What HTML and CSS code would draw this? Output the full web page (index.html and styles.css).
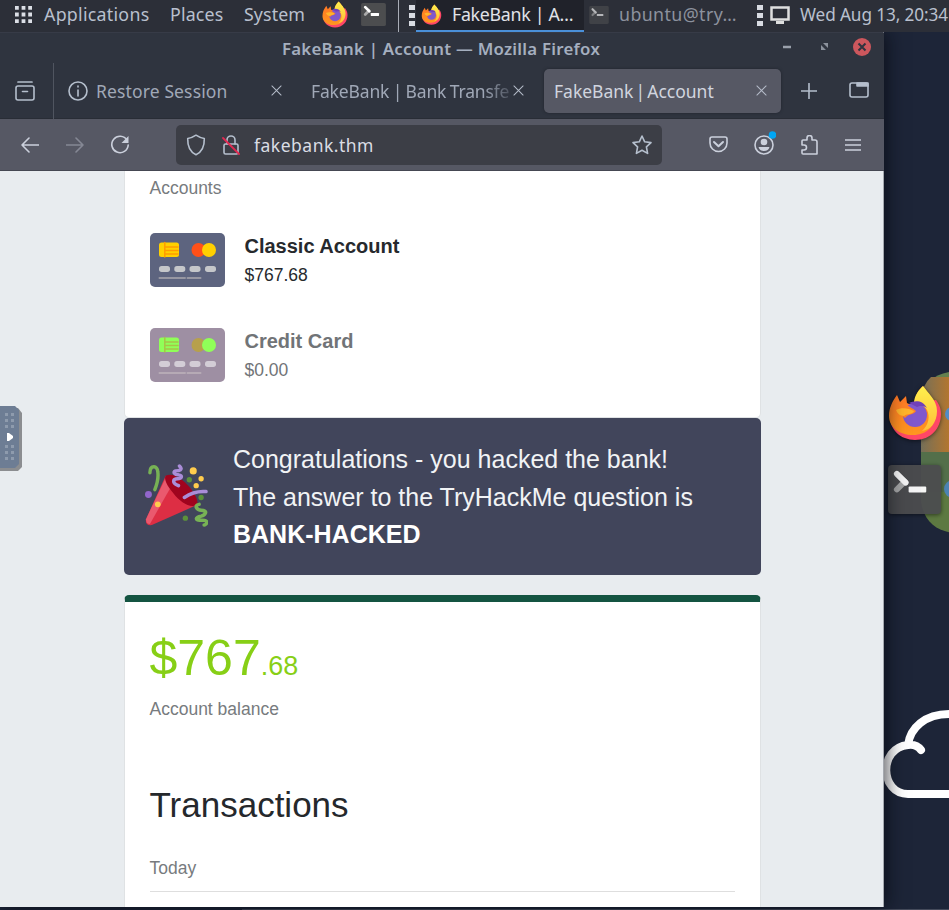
FILE: index.html
```html
<!DOCTYPE html>
<html lang="en">
<head>
<meta charset="utf-8">
<title>FakeBank | Account</title>
<link rel="stylesheet" href="styles.css">
</head>
<body>
<svg width="0" height="0" class="defs">
  <defs>
    <linearGradient id="fy" x1="0" y1="0" x2="0" y2="1"><stop offset="0" stop-color="#fff04d"/><stop offset="1" stop-color="#ffbd38"/></linearGradient>
    <linearGradient id="fo" x1="0" y1="0" x2="0" y2="1"><stop offset="0" stop-color="#ff7026"/><stop offset="1" stop-color="#ff971f"/></linearGradient>
    <symbol id="fox" viewBox="0 0 54 56">
      <path d="M4 22C-3 39 9 55 27 55c16 0 26-12 26-26 0-7-3-11-5-14z" fill="#ff4766"/>
      <path d="M1 31c0-8 3-14 8-21l3 7 6-6 1 7 8 4C25 14 30 5 35 1c4 6 13 14 13 25 0 15-9 24-23 24C11 50 1 42 1 31z" fill="url(#fo)"/>
      <path d="M26 19C26 10 31 5 35 1c4 6 14 14 14 25 0 12-7 19-15 20 7-6 8-15 5-21-3-5-7-6-13-6z" fill="url(#fy)"/>
      <circle cx="27" cy="30" r="12" fill="#8058cc"/>
      <path d="M16 17c4 5 9 6 12 9-2 4-7 2-11 7l-8-7z" fill="#ff8125"/>
      <path d="M8 25c5-3 13-2 18 1-2 4-6 2-10 5-4 0-7-3-8-6z" fill="#ffb42c"/>
      <path d="M21 18c6-3 14-3 18 5-4-3-8-2-10-1z" fill="#7040b8"/>
    </symbol>
    <symbol id="term" viewBox="0 0 54 50">
      <rect width="54" height="50" rx="4" fill="#4c4d4f"/>
      <path d="M9 25l8-8" stroke="#aaa" stroke-width="6" stroke-linecap="round"/>
      <path d="M9 9l9 9" stroke="#fff" stroke-width="6" stroke-linecap="round"/>
      <rect x="21" y="22" width="18" height="6" rx="1" fill="#fff"/>
    </symbol>
    <symbol id="x" viewBox="0 0 12 12"><path d="M1 1l10 10M11 1L1 11" stroke="#b5bcc9" stroke-width="1.1"/></symbol>
    <symbol id="card" viewBox="0 0 75 54">
      <rect class="c-bg" width="75" height="54" rx="5"/>
      <rect class="c-chip" x="9" y="9.500" width="20" height="14.500" rx="2.500"/>
      <path class="c-line" d="M14.800 9.500V24M15 14H28M15 17.500H28M15 21H28" stroke-width="1.500"/>
      <circle class="c-red" cx="48.500" cy="17" r="7"/>
      <circle class="c-chip" cx="59" cy="17" r="7"/>
      <g class="c-dot"><rect x="9" y="33" width="11" height="6" rx="2.700"/><rect x="24.300" y="33" width="11" height="6" rx="2.700"/><rect x="39.500" y="33" width="11" height="6" rx="2.700"/><rect x="55" y="33" width="11" height="6" rx="2.700"/></g>
      <path class="c-foot" d="M9.500 45H35M37.500 45H50.500" stroke-width="2"/>
    </symbol>
  </defs>
</svg>
<header class="panel">
  <svg class="apps" viewBox="0 0 18 18"><path d="M0 2h4M7 2h4M14 2h4M0 9h4M7 9h4M14 9h4M0 16h4M7 16h4M14 16h4" stroke="#dcdfe6" stroke-width="4"/></svg>
  <span class="menu applications">Applications</span><span class="menu places">Places</span><span class="menu system">System</span>
  <svg class="launch-fox"><use href="#fox"/></svg>
  <svg class="launch-term"><use href="#term"/></svg>
  <i class="divider"></i><i class="dots"></i>
  <div class="task active"><svg class="task-fox"><use href="#fox"/></svg><span class="task-a">FakeBank | A…</span></div>
  <div class="task"><svg class="task-term"><use href="#term"/></svg><span class="task-b">ubuntu@try…</span></div>
  <i class="dots"></i>
  <svg class="monitor" viewBox="0 0 20 18"><path d="M1.500 1.500h17v12h-17z" fill="none" stroke="#dedfdf" stroke-width="2.500"/><path d="M6 15h8v3H6z" fill="#dedfdf"/></svg>
  <span class="menu clock">Wed Aug 13, 20:34</span>
</header>
<main class="desktop">
  <svg class="wallpaper" viewBox="0 0 66 878">
    <defs><linearGradient id="snake" x1="0" y1="0" x2="1" y2="0"><stop offset="0" stop-color="#756f58"/><stop offset="1" stop-color="#b2762f"/></linearGradient></defs>
    <path d="M38 420V370C38 350 54 340 75 339v81z" fill="#64804e"/>
    <path d="M38 420V368q1-15 10-23h18v75z" fill="url(#snake)"/>
    <path d="M38 420h37v81c-17 0-34-8-37-32z" fill="#5d7941"/><path d="M38 420h28v40H38z" fill="#536f4a"/>
    <circle cx="69" cy="382" r="7" fill="#528cc7"/><circle cx="70" cy="457" r="9" fill="#4c83b3"/>
    <path d="M66 762H25c-28 0-30-46 0-49 6-1 10 1 13 5M25 713c2-17 17-31 41-31" fill="none" stroke="#fff" stroke-width="8" stroke-linecap="round"/>
  </svg>
  <svg class="dock-fox"><use href="#fox"/></svg>
  <svg class="dock-term"><use href="#term"/></svg>
  <section class="window">
    <div class="titlebar"><span class="window-title">FakeBank | Account — Mozilla Firefox</span>
      <svg class="controls" viewBox="0 0 90 20"><path d="M0 10h8" stroke="#9aa0ab" stroke-width="2.500"/><path d="M40 6h5v5zM38 8v5h5z" fill="#8b919c"/><circle cx="79" cy="10" r="9" fill="#cc575d"/><path d="M75.500 6.500l7 7m0-7l-7 7" stroke="#2f343f" stroke-width="2"/></svg>
    </div>
    <nav class="tabs">
      <div class="view"><svg viewBox="0 0 20 20"><path d="M3 1h14" stroke-width="1.700"/><rect x="1" y="5" width="18" height="14" rx="2"/><path d="M7.500 10.500h5"/></svg></div>
      <div class="tab first"><svg class="info" viewBox="0 0 20 20"><circle cx="10" cy="10" r="9"/><path d="M10 9v6M10 5v1"/></svg><span class="label restore">Restore Session</span><svg class="close"><use href="#x"/></svg></div>
      <div class="tab second"><span class="label transfer">FakeBank | Bank Transfe</span><svg class="close"><use href="#x"/></svg></div>
      <div class="tab current"><span class="label account">FakeBank | Account</span><svg class="close"><use href="#x"/></svg></div>
      <svg class="plus" viewBox="0 0 16 16"><path d="M8 .5v15M.5 8h15"/></svg>
      <svg class="all" viewBox="0 0 20 16"><rect x="1" y="1" width="18" height="14" rx="2"/><path d="M8 1v3h11V1z" fill="#b5bfcd"/></svg>
    </nav>
    <div class="toolbar">
      <svg class="back" viewBox="0 0 18 16"><path d="M18 8H1M8 1L1 8l7 7"/></svg>
      <svg class="forward" viewBox="0 0 18 16"><path d="M0 8h17M10 1l7 7-7 7"/></svg>
      <svg class="reload" viewBox="0 0 20 20"><path d="M17 5.200A8.200 8.200 0 1 0 18.200 10"/><path d="M18.500 1v7h-7z" fill="#cbd0dc" stroke="none"/></svg>
      <div class="url">
        <svg class="shield" viewBox="0 0 20 22"><path d="M10 1.200c3 2 5.500 3 8.300 3.300C18.500 12 16 18 10 20.700 4 18 1.500 12 1.700 4.500 4.500 4.200 7 3.200 10 1.200z"/></svg>
        <svg class="lock" viewBox="0 0 18 22"><path d="M5 10V6a4 4 0 0 1 8 0v4"/><rect x="2" y="10" width="14" height="10" rx="1.500"/><path d="M1 4l16 16" stroke="#e22850" stroke-width="1.800"/></svg>
        <span class="address">fakebank.thm</span>
        <svg class="star" viewBox="0 0 20 20"><path d="M10 1l2.700 5.800 6.300.8-4.600 4.300 1.200 6.500L10 15.200l-5.600 3.200 1.200-6.500L1 7.600l6.300-.8z"/></svg>
      </div>
      <svg class="pocket" viewBox="0 0 19 17"><path d="M3 1h13q2 0 2 2v4a8.500 8.500 0 0 1-17 0V3q0-2 2-2z"/><path d="M5 6l4.500 4.300L14 6" stroke-width="2"/></svg>
      <svg class="profile" viewBox="0 0 22 24"><circle cx="10" cy="14" r="9"/><circle cx="10" cy="11" r="3.300" fill="#cbd0dc" stroke="none"/><path d="M4.500 16h11q-1 4-5.500 4t-5.500-4z" fill="#cbd0dc" stroke="none"/><circle cx="18.500" cy="4" r="3.800" fill="#00a6f4" stroke="none"/></svg>
      <svg class="extension" viewBox="0 0 18 20"><path d="M7 5V3a2.500 2.500 0 0 1 5 0v2h3q2 0 2 2v12H3q-1 0-1-1v-3h2a2.500 2.500 0 0 0 0-5H2V6q0-1 1-1z"/></svg>
      <svg class="burger" viewBox="0 0 16 14"><path d="M0 2h16M0 7h16M0 12h16"/></svg>
    </div>
    <div class="page">
      <section class="accounts">
        <div class="muted">Accounts</div>
        <div class="row classic"><svg class="bank-card blue"><use href="#card"/></svg><div><h3>Classic Account</h3><p>$767.68</p></div></div>
        <div class="row credit"><svg class="bank-card mauve"><use href="#card"/></svg><div><h3>Credit Card</h3><p>$0.00</p></div></div>
      </section>
      <section class="banner">
        <svg class="party" viewBox="0 0 64 64"><path d="M21 12L1 56q-1 7 6 6l45-20z" fill="#dd2e44"/><path d="M21 14L1 56q0 5 4 5l22-39z" fill="#ea596e"/><path d="M21 12c7-4 17 3 24 11 8 10 10 17 7 19-7 3-17-4-23-12-7-8-10-15-8-18z" fill="#a0041e"/><path d="M5 9c0-8 8-8 8-1 1 7-1 13-3 18M55 41c-6 1-2 6 2 6 8 0 4 5 0 6-7 1-6 5 1 4 8 0 4 5 2 5" fill="none" stroke="#77b255" stroke-width="3.500" stroke-linecap="round"/><path d="M35 2c4 4 0 5-4 5-3 1-1 4 3 4 5 1 3 4-1 4-5 0-5 4-1 6l2 1M40 34q10-7 22-6" fill="none" stroke="#aa8dd8" stroke-width="3.500" stroke-linecap="round"/><g fill="#ffcc4d"><circle cx="49" cy="7" r="3.600"/><circle cx="57" cy="15" r="2.700"/><circle cx="52" cy="22" r="2.700"/><circle cx="13" cy="41" r="2.900"/></g><g fill="#5c913b"><circle cx="45" cy="16" r="2.700"/><circle cx="57" cy="34" r="2.700"/><circle cx="41" cy="55" r="2.700"/></g><circle cx="3.500" cy="31" r="3.500" fill="#9266cc"/></svg>
        <p>Congratulations - you hacked the bank!<br>The answer to the TryHackMe question is<br><b>BANK-HACKED</b></p>
      </section>
      <section class="balance">
        <div class="amount">$767<small>.68</small></div>
        <div class="muted">Account balance</div>
        <h2>Transactions</h2>
        <div class="muted today">Today</div>
      </section>
    </div>
  </section>
  <svg class="handle" viewBox="0 0 23 66"><path d="M0 2h18l4 5v54l-4 4H0z" fill="#8b8d90"/><path d="M0 0h15l4 4v54l-4 4H0z" fill="#6d7d94"/><path d="M6.500 7v15M12.500 7v15M6.500 39v15M12.500 39v15" stroke="#8e9bad" stroke-width="3" stroke-dasharray="3 3"/><path d="M7 27h2l4 3v2l-4 3H7z" fill="#fff"/></svg>
</main>
<footer class="bottom"><i></i></footer>
</body>
</html>
```
FILE: styles.css
```css
* { box-sizing: border-box; }
body { margin: 0; width: 949px; height: 910px; overflow: hidden; background: #1d2538; font-family: "Liberation Sans", Arial, sans-serif; }
.defs { position: absolute; }
svg { display: block; flex: none; }
h2, h3, p { margin: 0; }

.panel { position: relative; z-index: 1; display: flex; align-items: center; height: 32px; padding-left: 15px; background: #2c2f38; font: 17.8px/28px "Noto Sans", sans-serif; color: #b9c0ce; white-space: nowrap; overflow: hidden; }
.panel > * { flex: none; }
.apps { width: 17px; height: 17px; margin-right: 12px; margin-top: -4px; }
.menu { height: 32px; }
.applications { width: 126px; letter-spacing: .27px; }
.places { width: 74px; letter-spacing: .15px; }
.system { width: 78px; letter-spacing: .1px; }
.clock { height: 31px; font-size: 17.2px; letter-spacing: -.1px; }
.launch-fox { width: 26px; height: 27px; margin: -4px 13px 0 0; }
.launch-term { width: 25px; height: 23px; margin: -4px 12px 0 0; }
.divider { width: 1px; height: 32px; background: #a9adb7; margin-right: 10px; }
.dots { width: 6px; height: 21px; background: repeating-linear-gradient(#d8dbe2 0 5px, transparent 5px 8px); margin-top: -2px; }
.dots + .monitor { margin-left: 7px; }
.task { display: flex; align-items: center; width: 173px; height: 32px; padding: 0 0 3px 5px; color: #8c929e; }
.task.active { width: 168px; margin-left: 1px; background: #20222a; border-bottom: 2px solid #4a90d9; color: #e1e3e8; padding-bottom: 1px; }
.task-a { letter-spacing: -.3px; margin-top: -1px; }
.task-b { letter-spacing: .4px; margin-top: -1px; }
.task-fox { width: 21px; height: 21px; margin-right: 10px; }
.task-term { width: 20px; height: 18px; margin-right: 10px; opacity: .65; }
.monitor { width: 20px; height: 18px; margin: -3px 10px 0 0; }

.desktop { position: relative; height: 875px; }
.wallpaper { position: absolute; left: 883px; top: 0; width: 66px; height: 878px; }
.dock-fox { position: absolute; left: 888px; top: 353px; width: 54px; height: 56px; filter: drop-shadow(0 1px 2px #0008); }
.dock-term { position: absolute; left: 887px; top: 433px; width: 55px; height: 49px; filter: drop-shadow(0 1px 2px #0008); opacity: .95; }
.window { position: absolute; left: 0; top: 0; width: 884px; height: 875px; display: flex; flex-direction: column; box-shadow: 2px 0 18px #05080fc0; border-right: 1px solid #a5a9af; border-top: 1px solid #373b47; background: #2f343f; }
.window svg { fill: none; stroke: #b5bfcd; stroke-width: 1.6; stroke-linejoin: round; stroke-linecap: round; }
.titlebar { height: 30px; display: flex; align-items: center; padding-left: 282px; margin-right: -1px; background: #2f343f; }
.window-title { width: 505px; font: 600 16.8px/30px "Noto Sans", sans-serif; letter-spacing: .26px; color: #a5afbf; white-space: nowrap; padding-top: 2px; }
.controls { width: 90px; height: 20px; margin-left: -4px; margin-top: -3px; }
.window .controls { stroke: none; stroke-linecap: butt; }
.tabs { height: 56px; display: flex; align-items: center; margin-right: -1px; background: #2f343f; border-bottom: 1px solid #292d36; font: 17.5px/28px "Noto Sans", sans-serif; color: #a0a8b7; }
.view { width: 54px; height: 56px; padding: 18px 0 0 15px; border-right: 1px solid #505560; }
.view svg { width: 20px; height: 20px; }
.tab { display: flex; align-items: center; height: 44px; white-space: nowrap; }
.first { width: 247px; padding-left: 14px; }
.info { width: 20px; height: 20px; margin-right: 8px; }
.label { overflow: hidden; height: 27px; }
.restore { width: 175px; letter-spacing: .13px; }
.close { width: 11px; height: 11px; }
.second { width: 243px; padding-left: 10px; }
.transfer { width: 202px; word-spacing: -1px; letter-spacing: -.15px; -webkit-mask-image: linear-gradient(90deg, #000 172px, transparent 208px); mask-image: linear-gradient(90deg, #000 172px, transparent 208px); }
.current { width: 237px; padding-left: 10px; border-radius: 5px; background: #565864; color: #d1d5df; box-shadow: 0 0 3px #20242d; }
.account { width: 202px; word-spacing: -2.5px; }
.plus { width: 16px; height: 16px; margin-left: 20px; }
.all { width: 20px; height: 16px; margin: -1px 0 0 32px; }
.toolbar { height: 52px; display: flex; align-items: center; margin-right: -1px; background: #565864; border-bottom: 1px solid #454752; padding-left: 21px; }
.toolbar > svg { stroke: #cbd0dc; }
.back { width: 18px; height: 16px; }
.forward { width: 18px; height: 16px; margin-left: 27px; opacity: .4; }
.reload { width: 20px; height: 20px; margin-left: 26px; }
.url { width: 486px; height: 40px; margin-left: 46px; background: #3c3e46; border-radius: 5px; display: flex; align-items: center; padding-left: 10px; }
.shield { width: 20px; height: 22px; }
.lock { width: 18px; height: 22px; margin-left: 16px; }
.address { width: 378px; margin-left: 14px; letter-spacing: .5px; color: #dadde4; font: 17.5px/28px "Noto Sans", sans-serif; }
.star { width: 20px; height: 20px; }
.pocket { width: 19px; height: 17px; margin-left: 47px; }
.profile { width: 22px; height: 24px; margin: -4px 0 0 26px; }
.extension { width: 18px; height: 20px; margin-left: 24px; }
.burger { width: 16px; height: 14px; margin-left: 27px; }
.page { flex: 1; background: #e8ecef; overflow: hidden; padding: 0 122px 0 124px; }
.accounts { height: 247px; background: #fff; border: 1px solid #dfe2e4; border-top: 0; border-radius: 0 0 5px 5px; padding: 7px 25px 0 24.5px; }
.muted { font-size: 17.5px; line-height: 21px; color: #777b7e; }
.row { display: flex; height: 54px; gap: 20px; color: #26292d; }
.classic { margin-top: 33.5px; }
.credit { margin-top: 41px; }
.credit h3, .credit p { color: #717477; }
.bank-card { width: 75px; height: 54px; }
.window .bank-card { stroke: none; }
.row h3 { font-size: 20px; line-height: 27px; }
.row p { font-size: 17.5px; line-height: 30px; }
.blue { --bg: #5d647f; --chip: #ffd000; --line: #ff9b00; --red: #ff5018; --dot: #c5c7ca; --foot: #9797a2; }
.mauve { --bg: #9e8fa3; --chip: #90ff58; --line: #a8c448; --red: #b7a04b; --dot: #d3cdd6; --foot: #b6aab5; }
.c-bg { fill: var(--bg); }
.c-chip { fill: var(--chip); }
.c-line { stroke: var(--line); }
.c-red { fill: var(--red); }
.c-dot { fill: var(--dot); }
.c-foot { stroke: var(--foot); }
.banner { width: 637px; height: 157px; background: #41455b; border-radius: 5px; display: flex; align-items: center; padding-left: 21px; gap: 25px; color: #f1f3f5; font-size: 25px; line-height: 37.5px; white-space: nowrap; }
.party { width: 63px; height: 63px; margin-top: -2px; }
.window .party { stroke: none; }
.banner p { padding-top: 2px; }
.banner b { color: #fff; }
.balance { height: 330px; margin-top: 20px; border: 1px solid #dfe2e4; border-top: 7px solid #145441; border-radius: 5px 5px 0 0; background: #fff; padding: 27px 25px 0 24.5px; }
.amount { color: #87cf16; font-size: 50px; line-height: 58px; }
.amount small { font-size: 27px; }
.balance .muted { margin-top: 4px; }
h2 { font-size: 35px; line-height: 42px; margin-top: 64px; font-weight: 400; color: #25282c; }
.balance .today { height: 34px; margin-top: 32px; border-bottom: 1px solid #dedede; }
.handle { position: absolute; left: 0; top: 374px; width: 23px; height: 66px; }
.bottom { height: 3px; background: #1d2538; padding: 2px 0 0 242px; }
.bottom i { display: block; height: 1px; background: #454b5b; }
```
